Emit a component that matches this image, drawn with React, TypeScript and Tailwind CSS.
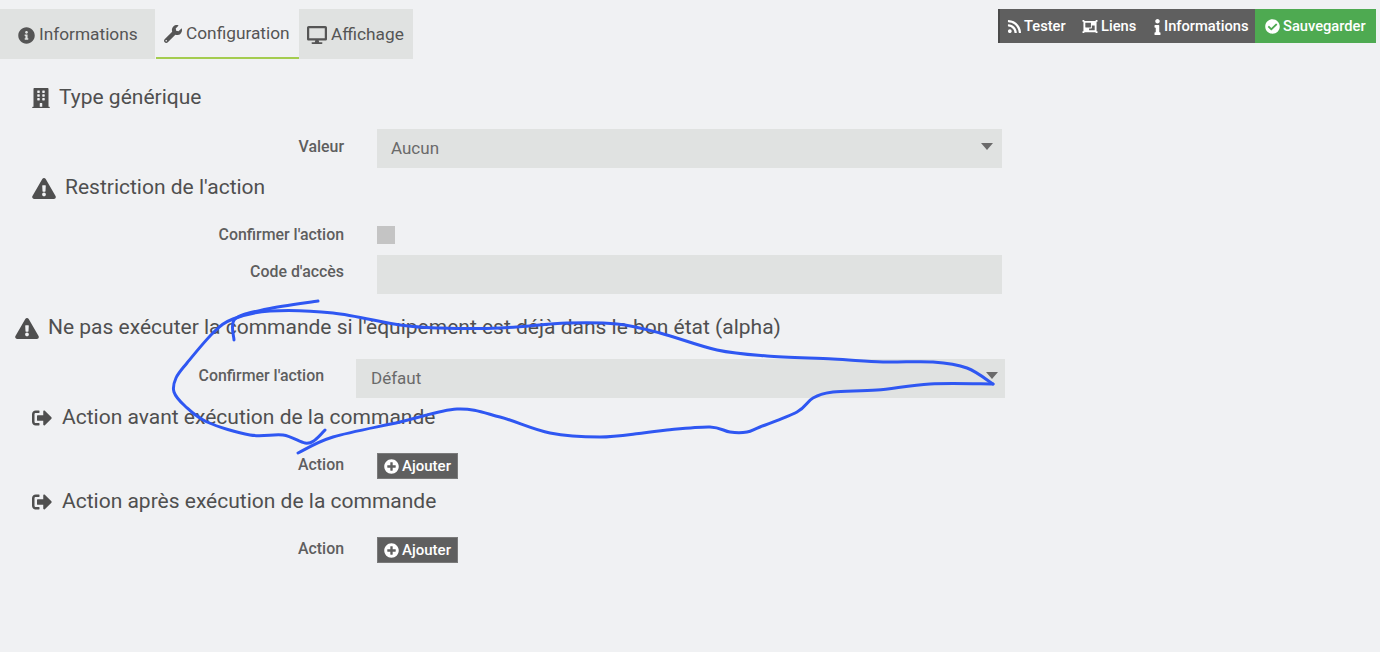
import type { ReactNode } from "react";
import {
  FaBuilding,
  FaCheckCircle,
  FaDesktop,
  FaExclamationTriangle,
  FaInfo,
  FaInfoCircle,
  FaObjectGroup,
  FaPlusCircle,
  FaRss,
  FaSignOutAlt,
  FaWrench,
} from "react-icons/fa";

// hand-drawn annotation, points read off the screenshot
const STROKES: [number, number][][] = [
  [[234, 340], [235, 319], [267, 309], [318, 301]],
  [
    [325, 430], [315, 440], [305, 443], [283, 435], [250, 435], [207, 422], [185, 406], [174, 392],
    [176, 378], [187, 363], [213, 333], [233, 319], [270, 311], [333, 313], [400, 325], [440, 328], [500, 328],
    [567, 323], [617, 324], [660, 333], [717, 350], [767, 356], [833, 359], [883, 362], [933, 362],
    [967, 368], [993, 384],
  ],
  [
    [993, 384], [930, 384], [877, 390], [833, 392], [813, 398], [797, 412], [760, 427], [747, 432],
    [730, 432], [710, 427], [667, 430], [643, 433], [600, 437], [550, 433], [500, 417], [457, 409],
    [400, 422], [333, 437], [298, 453],
  ],
];

function smooth(p: [number, number][]) {
  let d = `M${p[0][0]} ${p[0][1]}`;
  for (let i = 0; i < p.length - 1; i++) {
    const a = p[i - 1] ?? p[i];
    const b = p[i];
    const c = p[i + 1];
    const e = p[i + 2] ?? c;
    d += ` C${b[0] + (c[0] - a[0]) / 6} ${b[1] + (c[1] - a[1]) / 6} ${c[0] - (e[0] - b[0]) / 6} ${c[1] - (e[1] - b[1]) / 6} ${c[0]} ${c[1]}`;
  }
  return d;
}

function Tab({ icon, label, active, className }: { icon: ReactNode; label: string; active?: boolean; className: string }) {
  return (
    <div
      className={`flex h-[50px] items-center gap-[4px] pt-[2px] text-[17.3px] text-[#555] ${className} ${
        active ? "border-b-2 border-[#a4cc4f]" : "bg-[#e0e2e1]"
      }`}
    >
      {icon}
      <span>{label}</span>
    </div>
  );
}

function Heading({ icon, label, className }: { icon: ReactNode; label: string; className: string }) {
  return (
    <div className={`flex h-[38px] items-center pt-[2px] text-[21px] text-[#4f4f4f] ${className}`}>
      {icon}
      <span>{label}</span>
    </div>
  );
}

function Label({ children, className = "w-[344px]" }: { children: ReactNode; className?: string }) {
  return <div className={`text-right text-[15.9px] leading-[18px] font-medium text-[#5e5e5e] ${className}`}>{children}</div>;
}

function AddRow({ className }: { className: string }) {
  return (
    <div className={`flex items-center ${className}`}>
      <Label className="mb-[2px] w-[344px]">Action</Label>
      <button className="ml-[33px] flex h-[26px] w-[81px] items-center justify-center gap-[3px] border border-[#7a7a7a] bg-[#5f5f5f] text-[15px] font-medium text-white">
        <FaPlusCircle className="h-[15px] w-[15px]" />
        Ajouter
      </button>
    </div>
  );
}

export default function App() {
  return (
    <div className="relative h-[652px] w-[1380px] overflow-hidden bg-[#f0f1f3] font-['Roboto',sans-serif]">
      <div className="flex items-start justify-between pt-[9px] pr-[4px]">
        <div className="flex">
          <Tab
            icon={<FaInfoCircle className="h-[17px] w-[17px]" />}
            label="Informations"
            className="w-[155px] pl-[18px]"
          />
          <Tab
            icon={<FaWrench className="h-[18px] w-[18px]" />}
            label="Configuration"
            active
            className="ml-[1px] w-[143px] pl-[8px]"
          />
          <Tab
            icon={<FaDesktop className="h-[20px] w-[20px]" />}
            label="Affichage"
            className="w-[114px] pl-[8px]"
          />
        </div>
        <div className="flex h-[34px] border-l-2 border-[#4a4a4a] text-[14.7px] font-medium text-white">
          <div className="flex w-[74px] items-center gap-[2px] bg-[#5f5f5f] pl-[7px] pt-[1px]">
            <FaRss className="h-[15px] w-[15px]" />
            Tester
          </div>
          <div className="flex w-[71px] items-center gap-[3px] bg-[#5f5f5f] pl-[8px] pt-[1px]">
            <FaObjectGroup className="h-[15px] w-[16px]" />
            Liens
          </div>
          <div className="flex w-[110px] items-center gap-[2px] bg-[#5f5f5f] pl-[8px] pt-[1px]">
            <FaInfo className="h-[16px] w-[9px]" />
            Informations
          </div>
          <div className="flex w-[121px] items-center gap-[3px] bg-[#4eaa51] pl-[10px] pt-[1px]">
            <FaCheckCircle className="h-[15px] w-[15px]" />
            Sauvegarder
          </div>
        </div>
      </div>

      <div className="mt-[19px]">
        <Heading
          icon={<FaBuilding className="mr-[9px] h-[20px] w-[18px]" />}
          label="Type générique"
          className="pl-[32px]"
        />
        <div className="mt-[13px] flex items-center">
          <Label className="mb-[4px] w-[344px]">Valeur</Label>
          <div className="relative ml-[33px] flex h-[39px] w-[625px] items-center bg-[#e0e2e1] pl-[14px] text-[17px] text-[#6a6a6a]">
            Aucun
            <span className="absolute right-[9px] top-[14px] h-0 w-0 border-x-[6px] border-t-[7px] border-x-transparent border-t-[#6a6a6a]" />
          </div>
        </div>
        <Heading
          icon={<FaExclamationTriangle className="mr-[9px] h-[21px] w-[24px]" />}
          label="Restriction de l'action"
          className="pl-[32px]"
        />
        <div className="mt-[20px] flex h-[18px] items-center">
          <Label>Confirmer l'action</Label>
          <div className="ml-[33px] h-[18px] w-[18px] bg-[#c4c4c4]" />
        </div>
        <div className="mt-[11px] flex items-center">
          <Label className="mb-[5px] w-[344px]">Code d'accès</Label>
          <div className="ml-[33px] h-[39px] w-[625px] bg-[#e0e2e1]" />
        </div>
        <Heading
          icon={<FaExclamationTriangle className="mr-[9px] h-[21px] w-[24px]" />}
          label="Ne pas exécuter la commande si l'équipement est déjà dans le bon état (alpha)"
          className="mt-[14px] pl-[15px]"
        />
        <div className="mt-[13px] flex items-center">
          <Label className="mb-[5px] w-[324px]">Confirmer l'action</Label>
          <div className="relative ml-[32px] flex h-[39px] w-[649px] items-center bg-[#e0e2e1] pl-[15px] text-[17px] text-[#6a6a6a]">
            Défaut
            <span className="absolute right-[7px] top-[13px] h-0 w-0 border-x-[6px] border-t-[7px] border-x-transparent border-t-[#6a6a6a]" />
          </div>
        </div>
        <Heading
          icon={<FaSignOutAlt className="mr-[10px] h-[20px] w-[20px]" />}
          label="Action avant exécution de la commande"
          className="pl-[32px]"
        />
        <AddRow className="mt-[17px]" />
        <Heading
          icon={<FaSignOutAlt className="mr-[10px] h-[20px] w-[20px]" />}
          label="Action après exécution de la commande"
          className="mt-[3px] pl-[32px]"
        />
        <AddRow className="mt-[17px]" />
      </div>

      <svg
        className="pointer-events-none absolute left-0 top-0"
        width={1380}
        height={652}
        fill="none"
        stroke="#2f57f2"
        strokeWidth={3}
        strokeLinecap="round"
        strokeLinejoin="round"
      >
        {STROKES.map((points, i) => (
          <path key={i} d={smooth(points)} />
        ))}
      </svg>
    </div>
  );
}
